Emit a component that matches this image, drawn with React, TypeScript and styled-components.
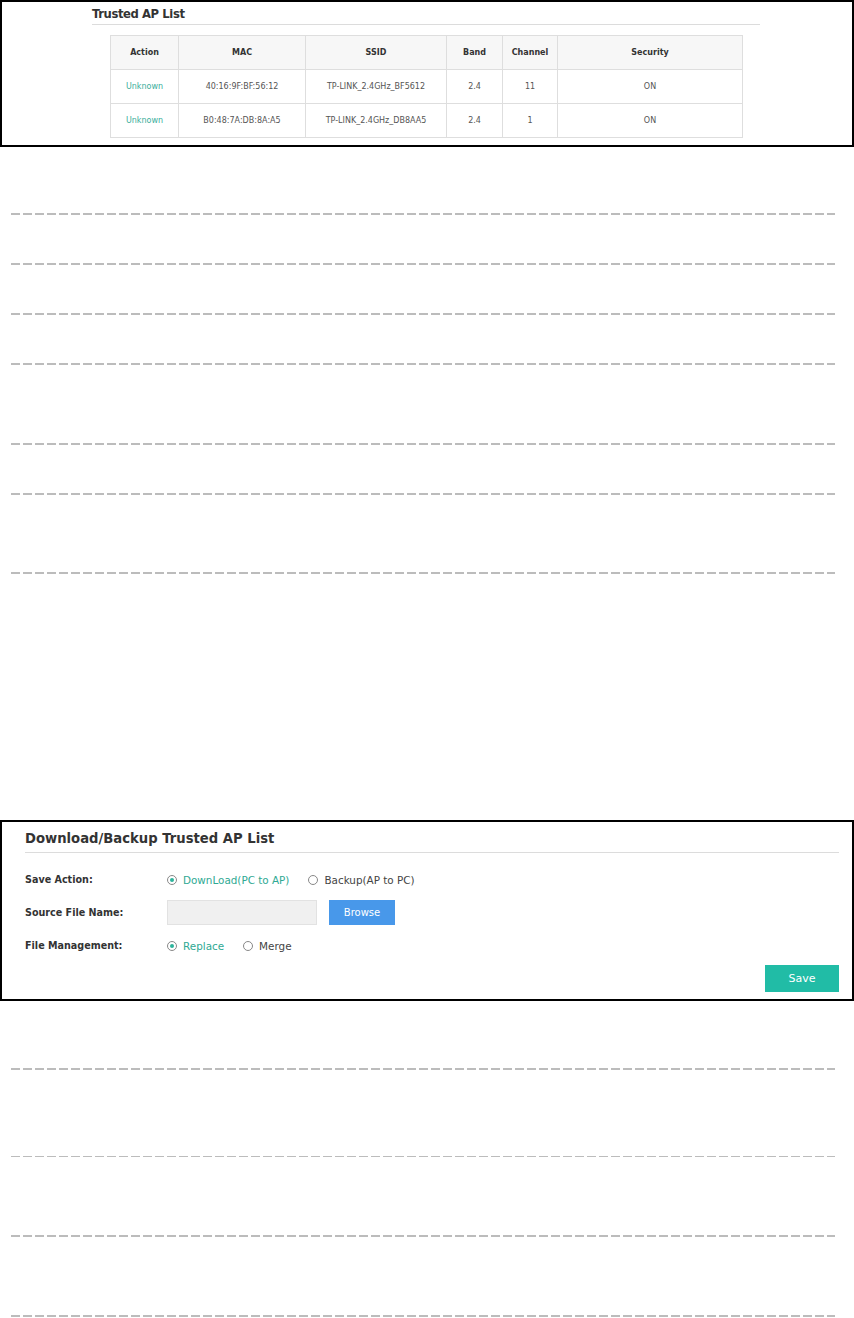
import { FC } from "react";
import styled, { createGlobalStyle } from "styled-components";

const GlobalStyle = createGlobalStyle`
  html, body {
    margin: 0;
    padding: 0;
    background: #fff;
  }
  body {
    font-family: "DejaVu Sans", Verdana, sans-serif;
    color: #333;
  }
`;

type ApRow = {
  mac: string;
  ssid: string;
  band: string;
  channel: string;
  security: string;
};

const apRows: ApRow[] = [
  { mac: "40:16:9F:BF:56:12", ssid: "TP-LINK_2.4GHz_BF5612", band: "2.4", channel: "11", security: "ON" },
  { mac: "B0:48:7A:DB:8A:A5", ssid: "TP-LINK_2.4GHz_DB8AA5", band: "2.4", channel: "1", security: "ON" },
];

const Page = styled.div`
  display: flex;
  flex-direction: column;
  width: 854px;
  min-height: 1318px;
`;

const Frame = styled.section<{ $height: number; $top?: number }>`
  box-sizing: border-box;
  width: 854px;
  height: ${(p) => p.$height}px;
  margin-top: ${(p) => p.$top ?? 0}px;
  border: 2px solid #000;
`;

const ListPanel = styled.div`
  padding: 5px 92px 0 90px;
`;

const PanelTitle = styled.h2<{ $size: number }>`
  margin: 0;
  font-size: ${(p) => p.$size}px;
  font-weight: 700;
  color: #333;
  border-bottom: 1px solid #dcdcdc;
`;

const ListTitle = styled(PanelTitle)`
  padding-bottom: 3px;
  letter-spacing: -0.4px;
`;

const Table = styled.table`
  margin: 10px 0 0 18px;
  width: 633px;
  border-collapse: collapse;
  font-size: 8px;

  th,
  td {
    height: 33px;
    padding: 0;
    border: 1px solid #dedede;
    text-align: center;
  }

  th {
    background: #f7f7f7;
    font-weight: 700;
    color: #333;
  }

  td {
    color: #555;
  }
`;

const StatusCell = styled.td`
  && {
    color: #3aae9b;
  }
`;

const Rule = styled.div<{ $top: number; $thin?: boolean }>`
  margin: ${(p) => p.$top}px 0 0 11px;
  width: 824px;
  height: ${(p) => (p.$thin ? 1 : 2)}px;
  background: repeating-linear-gradient(
    to right,
    #bcbcbc 0 9px,
    transparent 9px 12px
  );
`;

const BackupPanel = styled.div`
  padding: 9px 13px 0 23px;
  display: flex;
  flex-direction: column;
`;

const BackupTitle = styled(PanelTitle)`
  padding-bottom: 6px;
`;

const FormRows = styled.div`
  display: flex;
  flex-direction: column;
  margin-top: 15px;
  gap: 9px;
`;

const FormRow = styled.div<{ $height: number }>`
  display: flex;
  align-items: center;
  height: ${(p) => p.$height}px;
`;

const Label = styled.span`
  width: 142px;
  font-size: 9.6px;
  font-weight: 700;
  color: #333;
`;

const RadioGroup = styled.div`
  display: flex;
  align-items: center;
  gap: 19px;
`;

const RadioOption = styled.label<{ $checked?: boolean }>`
  display: flex;
  align-items: center;
  gap: 6px;
  font-size: 10.4px;
  color: ${(p) => (p.$checked ? "#2fa993" : "#444")};
`;

const RadioDot = styled.span<{ $checked?: boolean }>`
  box-sizing: border-box;
  width: 10px;
  height: 10px;
  border-radius: 50%;
  border: 1px solid #888;
  display: flex;
  align-items: center;
  justify-content: center;

  &::after {
    content: "";
    width: 4px;
    height: 4px;
    border-radius: 50%;
    background: ${(p) => (p.$checked ? "#2db39b" : "transparent")};
  }
`;

const FileInput = styled.div`
  box-sizing: border-box;
  width: 150px;
  height: 25px;
  background: #f0f0f0;
  border: 1px solid #e2e2e2;
`;

const BrowseButton = styled.button`
  margin-left: 12px;
  width: 66px;
  height: 25px;
  border: none;
  background: #4898ea;
  color: #fff;
  font-family: inherit;
  font-size: 10px;
  padding: 0;
`;

const Footer = styled.div`
  display: flex;
  justify-content: flex-end;
  margin-top: 8px;
`;

const SaveButton = styled.button`
  width: 74px;
  height: 27px;
  border: none;
  background: #21bca6;
  color: #fff;
  font-family: inherit;
  font-size: 11px;
  padding: 0;
`;

const Radio: FC<{ label: string; checked?: boolean }> = ({ label, checked }) => (
  <RadioOption $checked={checked}>
    <RadioDot $checked={checked} />
    {label}
  </RadioOption>
);

const App: FC = () => (
  <Page>
    <GlobalStyle />
    <Frame $height={147}>
      <ListPanel>
        <ListTitle $size={11.6}>Trusted AP List</ListTitle>
        <Table>
          <thead>
            <tr>
              <th style={{ width: 67 }}>Action</th>
              <th style={{ width: 126 }}>MAC</th>
              <th style={{ width: 140 }}>SSID</th>
              <th style={{ width: 55 }}>Band</th>
              <th style={{ width: 54 }}>Channel</th>
              <th>Security</th>
            </tr>
          </thead>
          <tbody>
            {apRows.map((row) => (
              <tr key={row.mac}>
                <StatusCell>Unknown</StatusCell>
                <td>{row.mac}</td>
                <td>{row.ssid}</td>
                <td>{row.band}</td>
                <td>{row.channel}</td>
                <td>{row.security}</td>
              </tr>
            ))}
          </tbody>
        </Table>
      </ListPanel>
    </Frame>

    <Rule $top={66} />
    <Rule $top={48} />
    <Rule $top={48} />
    <Rule $top={48} />
    <Rule $top={78} />
    <Rule $top={48} />
    <Rule $top={77} />

    <Frame $height={181} $top={246}>
      <BackupPanel>
        <BackupTitle $size={13.2}>Download/Backup Trusted AP List</BackupTitle>
        <FormRows>
          <FormRow $height={23}>
            <Label>Save Action:</Label>
            <RadioGroup>
              <Radio label="DownLoad(PC to AP)" checked />
              <Radio label="Backup(AP to PC)" />
            </RadioGroup>
          </FormRow>
          <FormRow $height={25}>
            <Label>Source File Name:</Label>
            <FileInput />
            <BrowseButton type="button">Browse</BrowseButton>
          </FormRow>
          <FormRow $height={23}>
            <Label>File Management:</Label>
            <RadioGroup>
              <Radio label="Replace" checked />
              <Radio label="Merge" />
            </RadioGroup>
          </FormRow>
        </FormRows>
        <Footer>
          <SaveButton type="button">Save</SaveButton>
        </Footer>
      </BackupPanel>
    </Frame>

    <Rule $top={67} />
    <Rule $top={86} $thin />
    <Rule $top={78} />
    <Rule $top={78} />
  </Page>
);

export default App;
